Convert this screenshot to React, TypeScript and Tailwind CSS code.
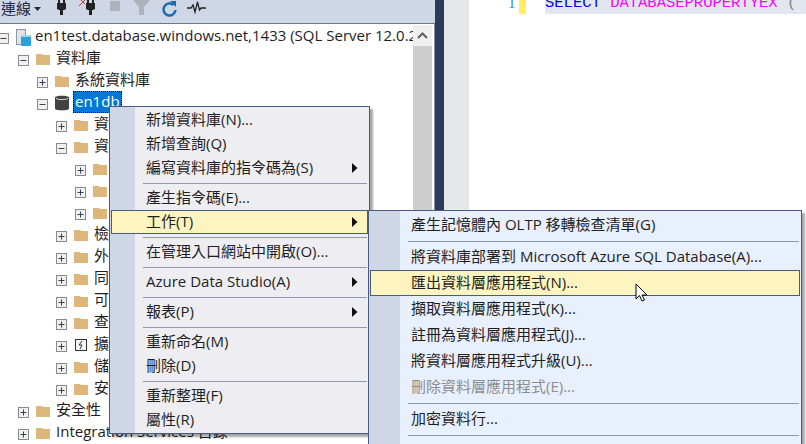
function Plus({ open }: { open?: boolean }) {
  return (
    <svg width="11" height="11" viewBox="0 0 11 11" className="shrink-0 block">
      <rect x="0.5" y="0.5" width="10" height="10" fill="#f0f0f0" stroke="#8a8a8a" />
      <path d="M2.500 5.500h6" stroke="#33415c" />
      {!open && <path d="M5.500 2.500v6" stroke="#33415c" />}
    </svg>
  );
}
function Folder() {
  return (
    <svg width="14" height="12" viewBox="0 0 14 12" className="shrink-0 block">
      <path d="M0 1h6l1 1h7v10H0z" fill="#dcb67a" />
    </svg>
  );
}
function Db() {
  return (
    <svg width="14" height="16" viewBox="0 0 14 16" className="shrink-0 block">
      <path d="M0 2.500C0 0 14 0 14 2.500v11c0 2.500-14 2.500-14 0z" fill="#424242" />
      <path d="M1 3.500c2.500 1.500 9.500 1.500 12 0" stroke="#d8d8d8" fill="none" />
    </svg>
  );
}
function Server() {
  return (
    <svg width="15" height="17" viewBox="0 0 15 17" className="shrink-0 block">
      <rect x="0.5" y="0.5" width="9" height="15" fill="#dfe3ea" stroke="#8d96a6" />
      <rect x="5" y="6" width="10" height="11" rx="1" fill="#29a0da" />
      <rect x="5" y="6" width="10" height="2" fill="#9fd6f0" />
    </svg>
  );
}
function Ext() {
  return (
    <svg width="14" height="14" viewBox="0 0 14 14" className="shrink-0 block">
      <rect x="1.500" y="1.500" width="11" height="11" fill="#f4f4f4" stroke="#333" />
      <path d="M8 3L5 7h3L6 11" stroke="#333" fill="none" />
    </svg>
  );
}
type Row = { lv: number; t: string; open?: boolean; icon?: "db" | "server" | "ext"; sel?: boolean };
const rows: Row[] = [
  { lv: 0, t: "en1test.database.windows.net,1433 (SQL Server 12.0.2", open: true, icon: "server" },
  { lv: 1, t: "資料庫", open: true },
  { lv: 2, t: "系統資料庫" },
  { lv: 2, t: "en1db", open: true, icon: "db", sel: true },
  { lv: 3, t: "資料庫圖表" },
  { lv: 3, t: "資料表", open: true },
  { lv: 4, t: "系統資料表" },
  { lv: 4, t: "外部資料表" },
  { lv: 4, t: "圖形資料表" },
  { lv: 3, t: "檢視" },
  { lv: 3, t: "外部資源" },
  { lv: 3, t: "同義字" },
  { lv: 3, t: "可程式性" },
  { lv: 3, t: "查詢存放區" },
  { lv: 3, t: "擴充事件", icon: "ext" },
  { lv: 3, t: "儲存體" },
  { lv: 3, t: "安全性" },
  { lv: 1, t: "安全性" },
  { lv: 1, t: "Integration Services 目錄" },
];
const pad: Record<number, string> = { 0: "-ml-[2px]", 1: "ml-[18px]", 2: "ml-[37px]", 3: "ml-[56px]", 4: "ml-[75px]" };
function TreeRow({ r }: { r: Row }) {
  return (
    <div className={`flex h-[22px] items-center whitespace-nowrap ${pad[r.lv]}`}>
      <span className="mt-[2px]"><Plus open={r.open} /></span>
      <span className="ml-[7px] flex w-[16px] items-center">
        {r.icon === "db" ? <Db /> : r.icon === "server" ? <Server /> : r.icon === "ext" ? <Ext /> : <Folder />}
      </span>
      {r.sel ? (
        <span className="ml-[2px] -mt-[2px] flex h-[22px] items-center border border-dotted border-black bg-[#0078d7] px-[1px] text-white"><span className="-mt-[2px]">{r.t}</span></span>
      ) : (
        <span className="ml-[4px] -mt-[4px]">{r.t}</span>
      )}
    </div>
  );
}
function Arrow() {
  return <svg width="6" height="10" viewBox="0 0 6 10" className="block"><path d="M0 0l5.500 5L0 10z" fill="#111" /></svg>;
}
function Item({ t, arrow, hot, dim, sub }: { t: string; arrow?: boolean; hot?: boolean; dim?: boolean; sub?: boolean }) {
  const h = sub ? "h-[26px]" : "h-[24px]";
  const left = sub ? "pl-[40px]" : "pl-[34px]";
  return (
    <div className={`relative flex ${h} items-center whitespace-nowrap border ${left} ${hot ? "border-[#4a5b82] bg-[#fdf4bf]" : "border-transparent"} ${dim ? "text-[#8d8d8d]" : ""}`}>
      <span className="-mt-[1px]">{t}</span>
      {arrow && <span className="absolute right-[9px] top-[6px]"><Arrow /></span>}
    </div>
  );
}
function Sep({ sub }: { sub?: boolean }) {
  return (
    <div className={`flex h-[6px] items-center ${sub ? "pl-[38px] pr-[1px]" : "pl-[32px] pr-[1px]"}`}>
      <div className="h-px w-full bg-[#8f98ad]" />
    </div>
  );
}
export default function App() {
  return (
    <div className="relative flex h-[444px] w-[806px] overflow-hidden bg-white text-[15px] leading-none text-[#1e1e1e]" style={{ fontFamily: '"Open Sans","Noto Sans CJK TC",sans-serif' }}>
      <div className="flex w-[435px] shrink-0 flex-col">
        <div className="flex h-[24px] shrink-0 items-start border-b border-[#6d7688] bg-[#cfd6e5]">
          <span className="ml-[1px] mt-[1px] text-[#1e2a44]">連線</span>
          <svg width="8" height="4" viewBox="0 0 8 4" className="ml-[3px] mt-[7px]"><path d="M0 0h7L3.500 4z" fill="#1e2a44" /></svg>
          <svg width="170" height="23" viewBox="50 0 170 23" className="ml-[8px]">
            <path d="M58 0h2v3h3V0h2v3h1v6l-2 1h-1v5h-3v-5h-1l-2-1V3h1z" fill="#222" />
            <path d="M87 0h2v3h3V0h2v3h1v6l-2 1h-1v5h-3v-5h-1l-2-1V3h1z" fill="#222" />
            <path d="M79 6l6-6M81 0l4 4" stroke="#c8402e" fill="none" />
            <rect x="110" y="1" width="10" height="10" fill="#aeb2bd" />
            <path d="M133 0h17l-6 7v8h-5V7z" fill="#aeb2bd" />
            <path d="M173.500 5A6 6 0 1 0 175.500 10" stroke="#1e6bb0" strokeWidth="2.500" fill="none" />
            <path d="M170 1h6v6z" fill="#1e6bb0" />
            <path d="M187 8h4l2-3 2 7 2.500-10 2 8 1.500-2h5" stroke="#222" strokeWidth="1.300" fill="none" />
          </svg>
        </div>
        <div className="flex min-h-0 flex-1">
          <div className="min-w-0 flex-1 overflow-hidden pt-[2px]">
            {rows.map((r, i) => <TreeRow key={i} r={r} />)}
          </div>
          <div className="mr-[2px] mt-[1px] flex w-[19px] shrink-0 flex-col bg-[#cdcdcd]">
            <div className="flex h-[21px] items-center justify-center bg-[#f0f0f0]">
              <svg width="11" height="7" viewBox="0 0 11 7"><path d="M1 6l4.500-4.500L10 6" stroke="#606060" strokeWidth="2" fill="none" /></svg>
            </div>
          </div>
          <div className="w-px shrink-0 bg-[#8a93a5]" />
        </div>
      </div>
      <div className="w-[9px] shrink-0 bg-[#2b3c59]" />
      <div className="w-[25px] shrink-0 bg-[#e6e7e8]" />
      <div className="flex min-w-0 flex-1 items-start whitespace-nowrap">
        <div className="ml-[39px] flex h-[14px] w-[11px] items-end overflow-hidden text-[#2b91af]" style={{ fontFamily: '"Liberation Serif",serif' }}><span className="mb-[3px]">1</span></div>
        <div className="h-[14px] w-[7px] shrink-0 bg-[#ffee62]" />
        <div className="ml-[19px] flex h-[14px] min-w-0 flex-1 items-end overflow-hidden bg-[#e2e6ee] text-[15.5px]" style={{ fontFamily: '"Liberation Mono",monospace' }}>
          <span className="mb-[3px]">
            <span className="text-[#0000ff]">SELECT</span>{" "}
            <span className="text-[#ff00ff]">DATABASEPROPERTYEX</span>{" "}
            <span className="text-[#808080]">(</span>
          </span>
        </div>
      </div>

      <div className="absolute left-[109px] top-[106px] w-[261px] border border-[#4a5b82] bg-[#eeeef2] p-px shadow-[3px_3px_2px_rgba(0,0,0,0.35)]">
        <div className="absolute bottom-0 left-0 top-0 w-[25px] bg-[#cfd6e5]" />
        <div className="relative">
          <Item t="新增資料庫(N)..." />
          <Item t="新增查詢(Q)" />
          <Item t="編寫資料庫的指令碼為(S)" arrow />
          <Sep />
          <Item t="產生指令碼(E)..." />
          <Item t="工作(T)" arrow hot />
          <Sep />
          <Item t="在管理入口網站中開啟(O)..." />
          <Sep />
          <Item t="Azure Data Studio(A)" arrow />
          <Sep />
          <Item t="報表(P)" arrow />
          <Sep />
          <Item t="重新命名(M)" />
          <Item t="刪除(D)" />
          <Sep />
          <Item t="重新整理(F)" />
          <Item t="屬性(R)" />
        </div>
      </div>

      <div className="absolute left-[368px] top-[210px] h-[260px] w-[434px] border border-[#4a5b82] bg-[#e8effd] p-px shadow-[3px_3px_2px_rgba(0,0,0,0.35)]">
        <div className="absolute bottom-0 left-0 top-0 w-[31px] bg-[#cfd6e5]" />
        <div className="relative">
          <Item sub t="產生記憶體內 OLTP 移轉檢查清單(G)" />
          <Sep sub />
          <Item sub t="將資料庫部署到 Microsoft Azure SQL Database(A)..." />
          <Item sub hot t="匯出資料層應用程式(N)..." />
          <Item sub t="擷取資料層應用程式(K)..." />
          <Item sub t="註冊為資料層應用程式(J)..." />
          <Item sub t="將資料層應用程式升級(U)..." />
          <Item sub dim t="刪除資料層應用程式(E)..." />
          <Sep sub />
          <Item sub t="加密資料行..." />
          <Sep sub />
        </div>
      </div>

      <svg width="13" height="21" viewBox="0 0 13 21" className="absolute left-[635px] top-[283px]">
        <path d="M1 1v15l3.500-3.500L7 18l2.500-1-2.500-5h5z" fill="#fff" stroke="#000" strokeLinejoin="round" />
      </svg>
    </div>
  );
}
